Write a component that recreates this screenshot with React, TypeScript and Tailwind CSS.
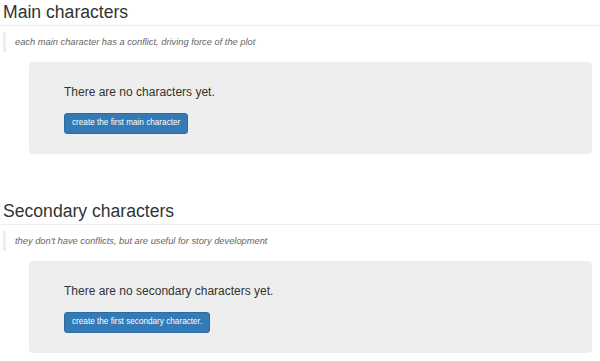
const SECTIONS = [
  {
    title: 'Main characters',
    note: 'each main character has a conflict, driving force of the plot',
    empty: 'There are no characters yet.',
    action: 'create the first main character',
  },
  {
    title: 'Secondary characters',
    note: "they don't have conflicts, but are useful for story development",
    empty: 'There are no secondary characters yet.',
    action: 'create the first secondary character.',
  },
];

export default function App() {
  return (
    <div className="w-[600px] h-[361px] overflow-hidden bg-white text-[#333] font-['Liberation_Sans',Arial,sans-serif]">
      {SECTIONS.map((s, i) => (
        <section key={s.title} className={i === 0 ? 'pt-0' : 'pt-[45px]'}>
          <div className="border-b border-[#eee] pt-[2px] pb-[2px]">
            <h1 className="pl-[3px] text-[17.6px] leading-[21px] font-normal">{s.title}</h1>
          </div>
          <blockquote className="mt-[6px] ml-[3px] border-l-[3px] border-[#eee] pl-[9px] py-[4px] text-[9.3px] leading-[12px] italic text-[#666]">
            {s.note}
          </blockquote>
          <div className="mt-[10px] ml-[29px] mr-[8px] rounded-[4px] bg-[#eee] pl-[35px] pt-[23px] pb-[20px]">
            <p className="text-[12px] leading-[15px] text-[#333]">{s.empty}</p>
            <button className="mt-[13px] h-[21px] rounded-[3px] border border-[#2e6da4] bg-[#337ab7] px-[7px] text-[8.2px] text-white">
              {s.action}
            </button>
          </div>
        </section>
      ))}
    </div>
  );
}
